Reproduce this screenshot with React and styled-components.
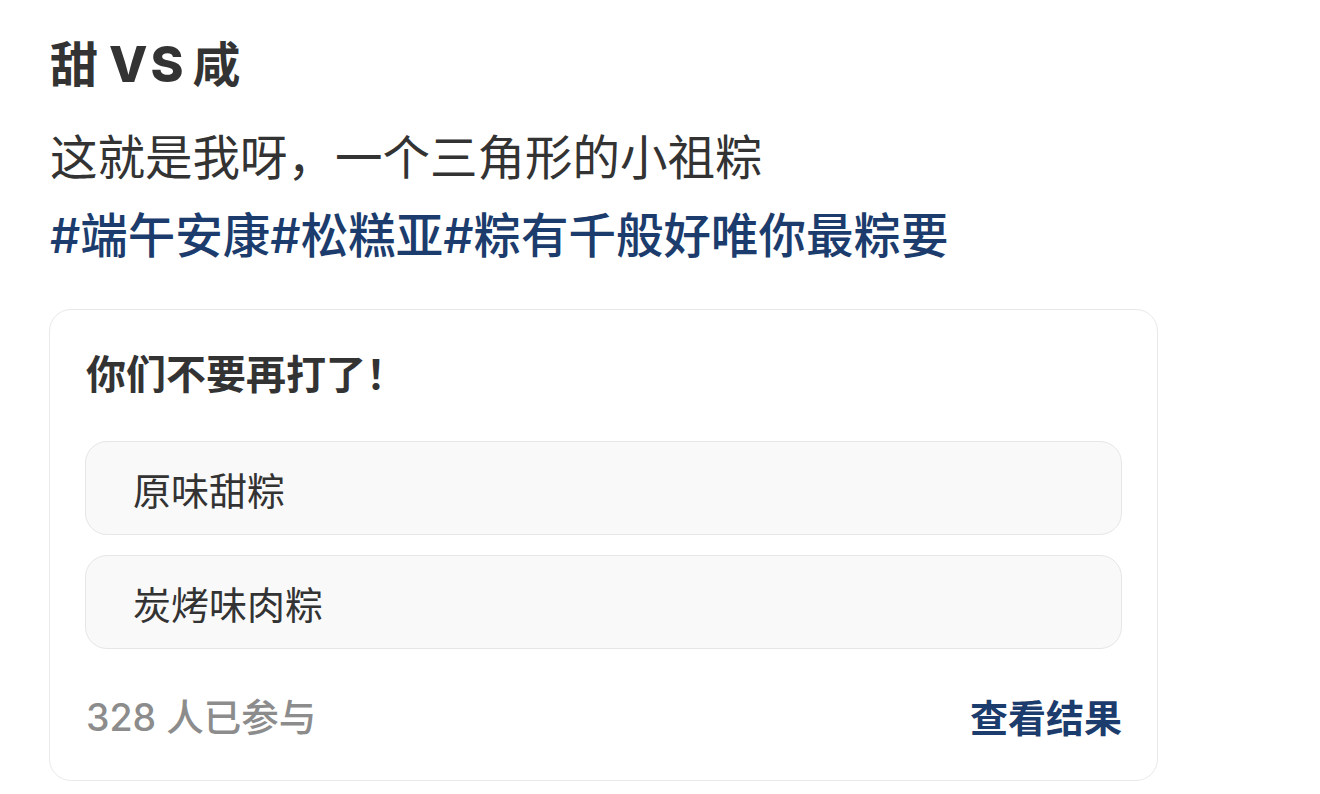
import React from "react";
import styled, { createGlobalStyle } from "styled-components";

const GlobalStyle = createGlobalStyle`
  html, body {
    margin: 0;
    padding: 0;
    background: #ffffff;
  }
  body {
    font-family: Inter, "Noto Sans CJK SC", sans-serif;
    color: #333333;
    -webkit-font-smoothing: antialiased;
  }
`;

const Page = styled.main`
  display: flex;
  flex-direction: column;
  padding: 30px 0 0 49px;
  width: 1109px;
`;

const Title = styled.h1`
  margin: 0 0 0 1px;
  font-size: 48px;
  line-height: 68px;
  font-weight: 700;
  color: #333333;
  display: flex;
  align-items: baseline;
`;

/* Latin part of the headline, set a little wider than the CJK around it */
const Versus = styled.span`
  font-size: 50px;
  font-weight: 800;
  letter-spacing: 3px;
  margin: 0 6px 0 11px;
`;

const Body = styled.p`
  margin: 25px 0 0 1px;
  font-size: 47.5px;
  line-height: 68px;
  font-weight: 400;
  color: #333333;
`;

const Tags = styled.p`
  margin: 10px 0 0 1px;
  font-size: 47.5px;
  line-height: 68px;
  font-weight: 500;
  color: #1b3c6c;
`;

const PollCard = styled.section`
  margin-top: 39px;
  border: 1px solid #e9e9e9;
  border-radius: 22px;
  padding: 38px 35px 35px 35px;
  display: flex;
  flex-direction: column;
`;

const Question = styled.h2`
  margin: 0 0 0 1px;
  font-size: 40px;
  line-height: 54px;
  font-weight: 600;
  color: #333333;
`;

const Options = styled.div`
  margin-top: 39px;
  display: flex;
  flex-direction: column;
  gap: 20px;
`;

const Option = styled.button`
  height: 94px;
  border: 1px solid #e6e6e6;
  border-radius: 22px;
  background: #f9f9f9;
  padding: 0 0 0 47px;
  display: flex;
  align-items: center;
  font-family: inherit;
  font-size: 38px;
  font-weight: 400;
  color: #333333;
  text-align: left;
  cursor: pointer;
`;

const Footer = styled.div`
  margin-top: 42px;
  display: flex;
  justify-content: space-between;
  align-items: center;
  line-height: 54px;
`;

const Count = styled.span`
  margin-left: 1px;
  font-size: 37.5px;
  font-weight: 500;
  color: #8c8c8c;
`;

const ResultLink = styled.a`
  font-size: 38px;
  font-weight: 600;
  color: #1b3c6c;
  text-decoration: none;
  cursor: pointer;
`;

export default function App() {
  const options = ["原味甜粽", "炭烤味肉粽"];
  return (
    <>
      <GlobalStyle />
      <Page>
        <Title>
          甜<Versus>VS</Versus>咸
        </Title>
        <Body>这就是我呀，一个三角形的小祖粽</Body>
        <Tags>#端午安康#松糕亚#粽有千般好唯你最粽要</Tags>
        <PollCard>
          <Question>你们不要再打了！</Question>
          <Options>
            {options.map((o) => (
              <Option key={o}>{o}</Option>
            ))}
          </Options>
          <Footer>
            <Count>328 人已参与</Count>
            <ResultLink>查看结果</ResultLink>
          </Footer>
        </PollCard>
      </Page>
    </>
  );
}
